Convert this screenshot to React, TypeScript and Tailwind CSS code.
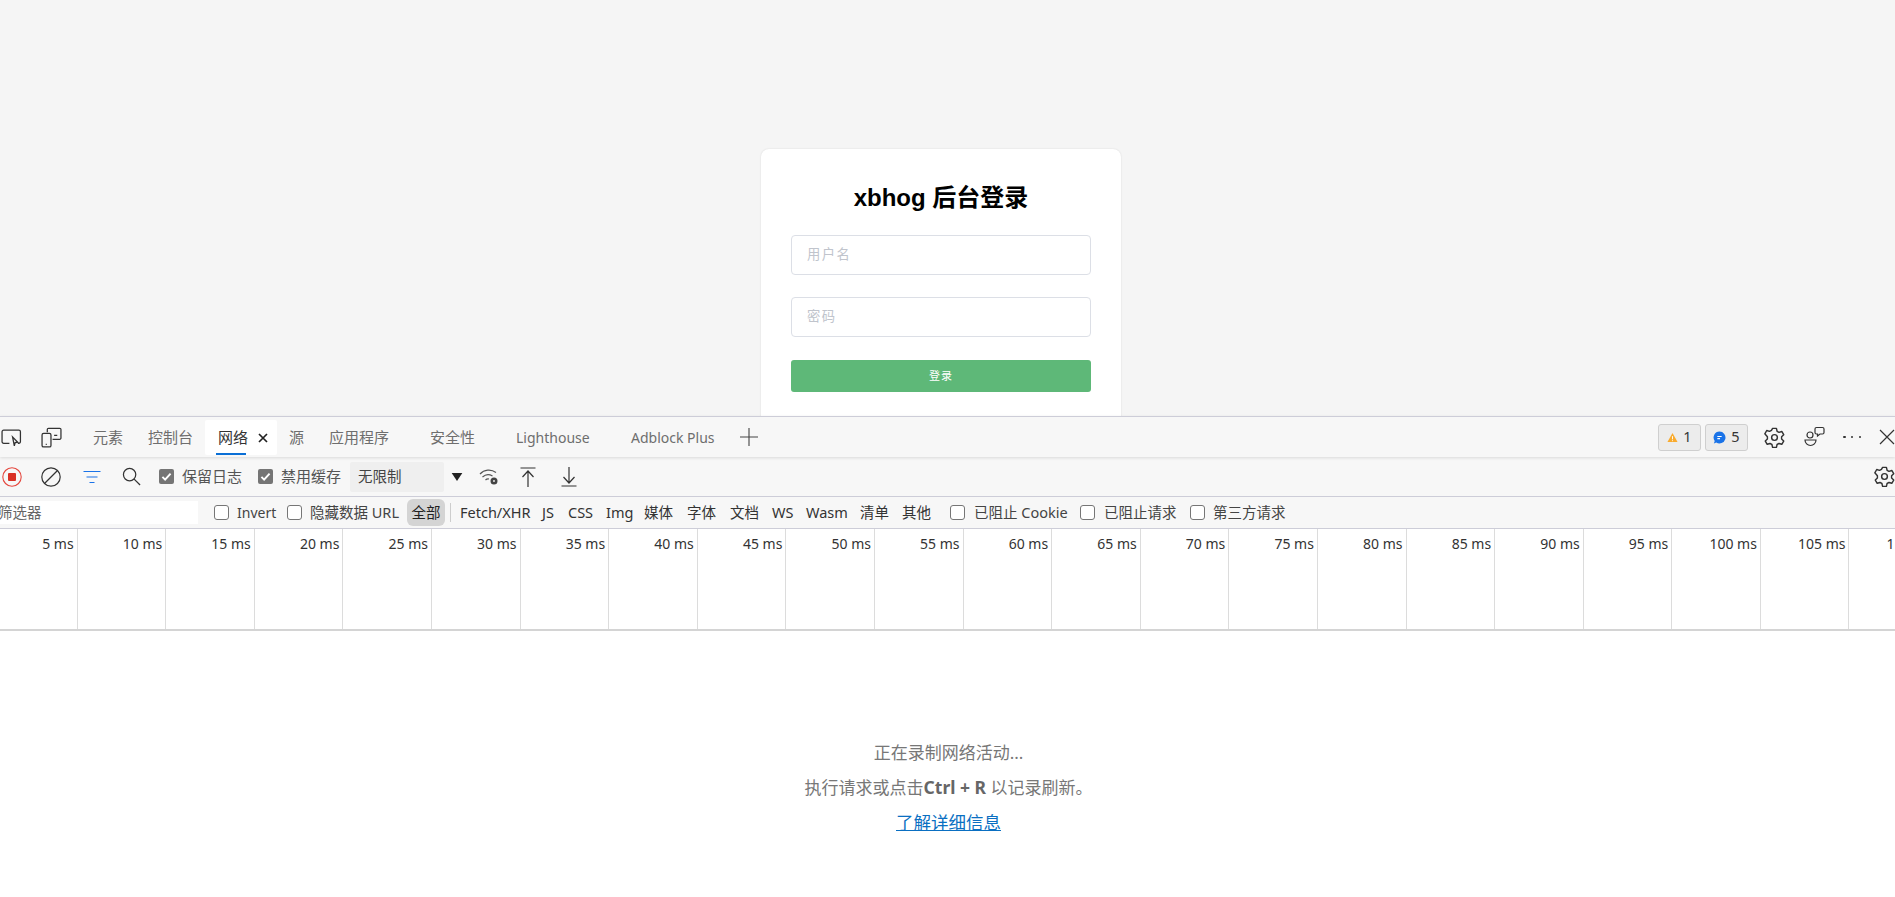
import React from 'react';

const ui = 'font-["Noto_Sans","Noto_Sans_CJK_SC",sans-serif]';

const tabs = [
  { label: '元素', cls: 'ml-[31px] w-[29px]' },
  { label: '控制台', cls: 'ml-[26px] w-[44px]' },
];
const tabsAfter = [
  { label: '源', cls: 'ml-[12px] w-[14px]' },
  { label: '应用程序', cls: 'ml-[26px] w-[59px]' },
  { label: '安全性', cls: 'ml-[42px] w-[44px]' },
  { label: 'Lighthouse', cls: 'ml-[42px] w-[73px] text-[14px]' },
  { label: 'Adblock Plus', cls: 'ml-[42px] w-[85px] text-[14px]' },
];

const types = [
  { label: 'Fetch/XHR', cls: 'ml-[9px] w-[70px]' },
  { label: 'JS', cls: 'ml-[12px] w-[13px]' },
  { label: 'CSS', cls: 'ml-[13px] w-[25px]' },
  { label: 'Img', cls: 'ml-[13px] w-[25px]' },
  { label: '媒体', cls: 'ml-[13px] w-[30px]' },
  { label: '字体', cls: 'ml-[13px] w-[29px]' },
  { label: '文档', cls: 'ml-[14px] w-[28px]' },
  { label: 'WS', cls: 'ml-[14px] w-[21px]' },
  { label: 'Wasm', cls: 'ml-[13px] w-[39px]' },
  { label: '清单', cls: 'ml-[15px] w-[28px]' },
  { label: '其他', cls: 'ml-[14px] w-[29px]' },
];

const ticks = Array.from({ length: 22 }, (_, i) => (i + 1) * 5);

function Gear({ className }: { className: string }) {
  return (
    <svg viewBox="0 0 24 24" fill="none" stroke="#333" strokeWidth="1.5" strokeLinejoin="round" className={className}>
      <path d="M10 2.500h4l.7 3 2 1.100 2.900-.9 2 3.400-2.200 2.100v2.400l2.200 2.100-2 3.400-2.900-.9-2 1.100-.7 3h-4l-.7-3-2-1.100-2.900.9-2-3.400 2.200-2.100v-2.400L1.900 8.100l2-3.400 2.900.9 2-1.100z" />
      <circle cx="12" cy="12" r="3" />
    </svg>
  );
}

function Box({ checked, cls }: { checked?: boolean; cls: string }) {
  if (checked) {
    return (
      <span className={`${cls} flex h-[15px] w-[15px] shrink-0 items-center justify-center rounded-[2px] bg-[#757575]`}>
        <svg viewBox="0 0 16 16" fill="none" stroke="#fff" strokeWidth="2.4" className="h-[13px] w-[13px]">
          <path d="M3 8.500l3.300 3.300L13 4.500" />
        </svg>
      </span>
    );
  }
  return <span className={`${cls} h-[15px] w-[15px] shrink-0 rounded-[3px] border border-[#767676] bg-white`} />;
}

export default function App() {
  return (
    <div className={`flex h-[897px] w-[1895px] flex-col overflow-hidden bg-white ${ui}`}>
      {/* page behind devtools */}
      <div className="flex h-[416px] shrink-0 justify-center overflow-hidden bg-[#f5f5f5] pt-[149px] pr-[13px]">
        <div className="h-[300px] w-[360px] rounded-[8px] bg-white px-[30px] pt-[30px] shadow-[0_0_2px_rgba(0,0,0,0.12)]">
          <h1 className='text-center font-["Liberation_Sans","Noto_Sans_CJK_SC",sans-serif] text-[24px] leading-[38px] font-bold text-black'>
            xbhog 后台登录
          </h1>
          <div className="mt-[18px] flex h-[40px] items-center rounded-[4px] border border-[#dcdfe6] px-[15px] text-[13.3px] tracking-[1.500px] text-[#c0c4cc]">
            用户名
          </div>
          <div className="mt-[22px] flex h-[40px] items-center rounded-[4px] border border-[#dcdfe6] px-[15px] text-[13.3px] tracking-[1.500px] text-[#c0c4cc]">
            密码
          </div>
          <div className="mt-[23px] flex h-[32px] items-center justify-center rounded-[3px] bg-[#5eb878] text-[11px] tracking-[1px] text-white">
            登录
          </div>
        </div>
      </div>

      {/* devtools tab strip */}
      <div className="relative z-10 flex h-[41px] shrink-0 items-center border-t border-[#cdcdd8] bg-[#f7f7f7] text-[15px] text-[#6e6e6e] shadow-[0_1px_3px_rgba(0,0,0,0.12)]">
        <svg viewBox="0 0 20 20" fill="none" stroke="#333" strokeWidth="1.2" className="ml-[1px] h-[21px] w-[21px] shrink-0">
          <path d="M8 15.500H2.500a1.500 1.500 0 0 1-1.500-1.500V4.500A1.500 1.500 0 0 1 2.500 3h14.500A1.500 1.500 0 0 1 18.500 4.500V14a1.500 1.500 0 0 1-1.500 1.500h-1" />
          <path d="M11 9.500l5 5-2.500.4-.8 3z" fill="none" />
        </svg>
        <svg viewBox="0 0 20 20" fill="none" stroke="#333" strokeWidth="1.2" className="ml-[19px] h-[21px] w-[21px] shrink-0">
          <path d="M6 5V2.500A1.200 1.200 0 0 1 7.200 1.200h10.600A1.200 1.200 0 0 1 19 2.500v8a1.200 1.200 0 0 1-1.200 1.200H11" />
          <rect x="1" y="6" width="8.500" height="13" rx="1.500" />
          <path d="M12.500 8h3M4.500 16.500h1" />
        </svg>
        {tabs.map(t => (
          <span key={t.label} className={`${t.cls} shrink-0 whitespace-nowrap`}>{t.label}</span>
        ))}
        <div className="relative ml-[13px] mt-[3px] flex h-[35px] w-[72px] shrink-0 items-center self-start rounded-[2px] bg-white pl-[13px] text-[#333]">
          网络
          <svg viewBox="0 0 10 10" stroke="#222" strokeWidth="1.700" className="absolute left-[53px] h-[10px] w-[10px]">
            <path d="M1 1l8 8M9 1l-8 8" />
          </svg>
          <span className="absolute bottom-0 left-[11px] h-[2px] w-[30px] bg-[#0a6fd6]" />
        </div>
        {tabsAfter.map(t => (
          <span key={t.label} className={`${t.cls} shrink-0 whitespace-nowrap`}>{t.label}</span>
        ))}
        <svg viewBox="0 0 20 20" stroke="#444" strokeWidth="1.100" className="ml-[23px] h-[20px] w-[20px] shrink-0">
          <path d="M10 1v18M1 10h18" />
        </svg>
        <div className="ml-auto flex items-center text-[#333]">
          <div className="flex h-[27px] w-[43px] items-center justify-center gap-[5px] rounded-[3px] border border-[#cfcfcf] bg-[#ececec] text-[14.500px]">
            <svg viewBox="0 0 12 12" className="h-[11px] w-[11px]"><path d="M6 1l5.500 10H.5z" fill="#f9ab2e" /><path d="M6 4.500v3.500M6 9v1" stroke="#fff" /></svg>
            1
          </div>
          <div className="ml-[4px] flex h-[27px] w-[43px] items-center justify-center gap-[5px] rounded-[3px] border border-[#cfcfcf] bg-[#ececec] text-[14.500px]">
            <svg viewBox="0 0 12 12" className="h-[13px] w-[13px]"><path d="M6 .5a5.500 5.500 0 1 1-3 10.100L.8 11.500l.8-2.300A5.500 5.500 0 0 1 6 .5z" fill="#1a73e8" /><path d="M4 5h4M4 7h2.500" stroke="#fff" /></svg>
            5
          </div>
          <Gear className="ml-[15px] h-[23px] w-[23px]" />
          <svg viewBox="0 0 22 22" fill="none" stroke="#333" strokeWidth="1.200" className="ml-[18px] h-[22px] w-[22px]">
            <circle cx="6" cy="9" r="3" />
            <path d="M1 14h11a5.500 5.500 0 0 1-11 0z" />
            <path d="M11 3a1.500 1.500 0 0 1 1.500-1.500h6A1.500 1.500 0 0 1 20 3v3.500A1.500 1.500 0 0 1 18.500 8H16l-2.500 2V8h-1A1.500 1.500 0 0 1 11 6.500z" />
          </svg>
          <span className="ml-[16px] flex w-[20px] justify-between px-[1px]">
            <span className="h-[2.500px] w-[2.500px] rounded-full bg-[#333]" />
            <span className="h-[2.500px] w-[2.500px] rounded-full bg-[#333]" />
            <span className="h-[2.500px] w-[2.500px] rounded-full bg-[#333]" />
          </span>
          <svg viewBox="0 0 16 16" stroke="#333" strokeWidth="1.200" className="ml-[17px] h-[16px] w-[16px] shrink-0">
            <path d="M1 1l14 14M15 1L1 15" />
          </svg>
        </div>
      </div>

      {/* recording toolbar */}
      <div className="flex h-[40px] shrink-0 items-center border-b border-[#cdcdd8] bg-[#f7f7f7] text-[15px] text-[#555]">
        <svg viewBox="0 0 20 20" fill="none" className="ml-[2px] h-[20px] w-[20px] shrink-0">
          <circle cx="10" cy="10" r="9.200" stroke="#e5483f" strokeWidth="1.100" />
          <rect x="6" y="6" width="8" height="8" rx="1" fill="#d93025" />
        </svg>
        <svg viewBox="0 0 20 20" fill="none" stroke="#333" strokeWidth="1.200" className="ml-[19px] h-[20px] w-[20px] shrink-0">
          <circle cx="10" cy="10" r="9.200" />
          <path d="M3.500 16.500l13-13" />
        </svg>
        <svg viewBox="0 0 18 14" fill="none" stroke="#1a73e8" strokeWidth="1.100" className="ml-[22px] h-[14px] w-[18px] shrink-0">
          <path d="M.5 1.500h17M3.500 7h11M6.500 12.500h5" />
        </svg>
        <svg viewBox="0 0 20 20" fill="none" stroke="#333" strokeWidth="1.300" className="ml-[21px] h-[19px] w-[19px] shrink-0">
          <circle cx="8" cy="8" r="6.500" />
          <path d="M12.800 12.800L19 19" />
        </svg>
        <Box checked cls="ml-[18px]" />
        <span className="ml-[8px] w-[59px] shrink-0 whitespace-nowrap">保留日志</span>
        <Box checked cls="ml-[17px]" />
        <span className="ml-[8px] w-[59px] shrink-0 whitespace-nowrap">禁用缓存</span>
        <div className="ml-[10px] flex h-[30px] w-[94px] shrink-0 items-center rounded-[2px] bg-[#efefef] pl-[8px] text-[14.500px] text-[#444]">无限制</div>
        <svg viewBox="0 0 12 9" className="ml-[7px] h-[8px] w-[12px] shrink-0"><path d="M0 0h12L6 9z" fill="#222" /></svg>
        <svg viewBox="0 0 20 18" fill="none" stroke="#555" strokeWidth="1.200" className="ml-[16px] h-[18px] w-[20px] shrink-0">
          <path d="M1 6a12 12 0 0 1 16-1.500M3.500 9a8.500 8.500 0 0 1 10-1M6.500 12a4 4 0 0 1 3.500-1" />
          <circle cx="15" cy="13" r="2.200" strokeWidth="2.600" stroke="#444" />
        </svg>
        <svg viewBox="0 0 16 20" fill="none" stroke="#333" strokeWidth="1.200" className="ml-[21px] h-[20px] w-[16px] shrink-0">
          <path d="M.5 1h15M8 4v16M2.500 10L8 4l5.500 6" />
        </svg>
        <svg viewBox="0 0 16 20" fill="none" stroke="#333" strokeWidth="1.200" className="ml-[25px] h-[20px] w-[16px] shrink-0">
          <path d="M.5 19h15M8 0v16M2.500 10L8 16l5.500-6" />
        </svg>
        <Gear className="ml-auto -mr-[1px] h-[23px] w-[23px] shrink-0" />
      </div>

      {/* filter row */}
      <div className="flex h-[32px] shrink-0 items-center border-b border-[#cdcdd8] bg-[#f7f7f7] text-[14.500px] text-[#444]">
        <div className="flex h-[23px] w-[198px] shrink-0 items-center bg-white text-[#666]">
          <span className="-ml-[2px]">筛选器</span>
        </div>
        <Box cls="ml-[16px]" />
        <span className="ml-[8px] w-[37px] shrink-0 whitespace-nowrap text-[14px]">Invert</span>
        <Box cls="ml-[13px]" />
        <span className="ml-[8px] w-[90px] shrink-0 whitespace-nowrap">隐藏数据 URL</span>
        <div className="ml-[7px] flex h-[27px] w-[38px] shrink-0 items-center justify-center rounded-[6px] bg-[#d4d4d4] text-[#222]">全部</div>
        <span className="ml-[5px] h-[19px] w-[1px] shrink-0 bg-[#cdcdcd]" />
        {types.map(t => (
          <span key={t.label} className={`${t.cls} shrink-0 whitespace-nowrap text-[#333]`}>{t.label}</span>
        ))}
        <Box cls="ml-[19px]" />
        <span className="ml-[9px] w-[94px] shrink-0 whitespace-nowrap">已阻止 Cookie</span>
        <Box cls="ml-[12px]" />
        <span className="ml-[9px] w-[73px] shrink-0 whitespace-nowrap">已阻止请求</span>
        <Box cls="ml-[13px]" />
        <span className="ml-[8px] w-[74px] shrink-0 whitespace-nowrap">第三方请求</span>
      </div>

      {/* timeline overview */}
      <div className="-ml-[11px] flex h-[102px] shrink-0 border-b-2 border-[#d4d4d4] text-[14px] text-[#333]">
        {ticks.map(ms => (
          <div key={ms} className="flex h-full w-[88.600px] shrink-0 justify-end whitespace-nowrap border-r border-[#dcdcdc] pt-[5px] pr-[3px] leading-[20px]">
            {ms} ms
          </div>
        ))}
      </div>

      {/* empty state */}
      <div className="flex flex-1 flex-col items-center pt-[104px] pl-[2px] text-[17px] leading-[35px] text-[#777]">
        <div>正在录制网络活动...</div>
        <div>执行请求或点击<b className="text-[17.500px] text-[#666]">Ctrl + R</b> 以记录刷新。</div>
        <div className="text-[17.500px] text-[#0a6fc2] underline">了解详细信息</div>
      </div>
    </div>
  );
}
